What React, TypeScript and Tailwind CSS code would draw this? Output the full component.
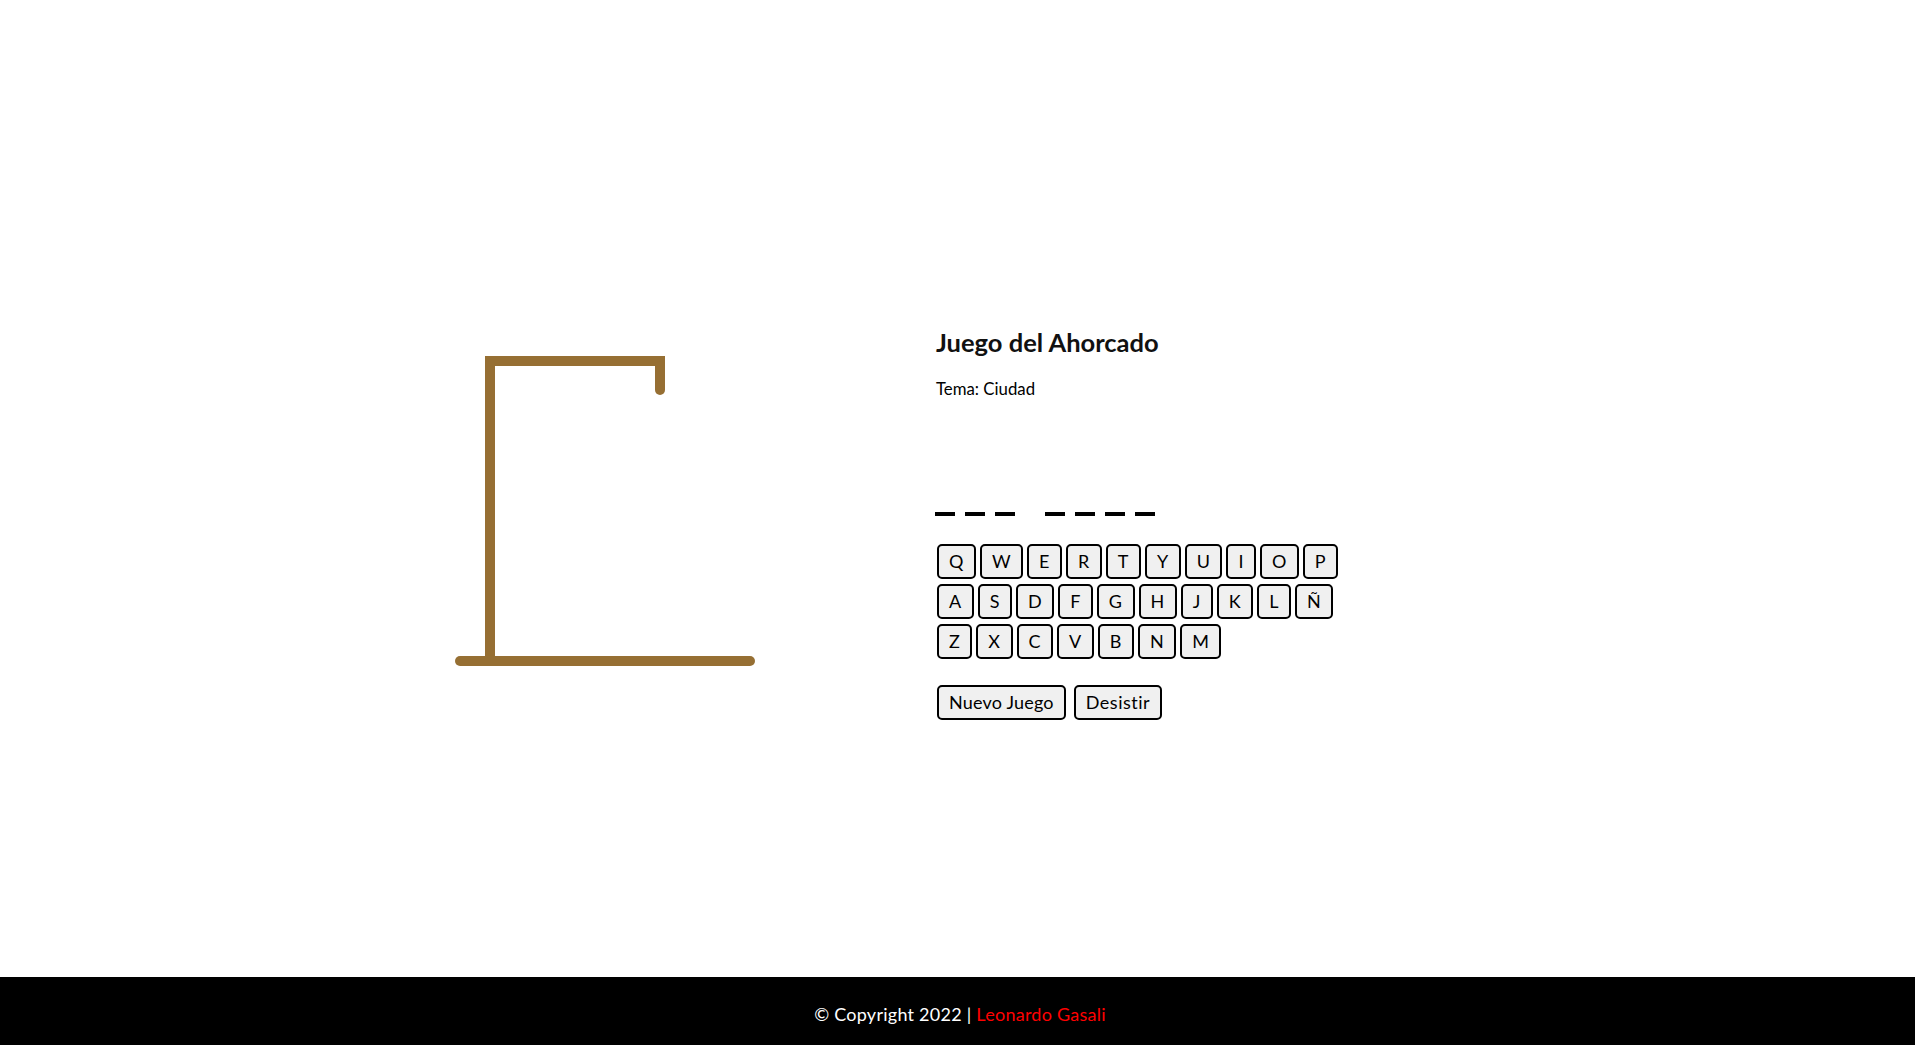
import React from "react";

const rows = [
  ["Q", "W", "E", "R", "T", "Y", "U", "I", "O", "P"],
  ["A", "S", "D", "F", "G", "H", "J", "K", "L", "Ñ"],
  ["Z", "X", "C", "V", "B", "N", "M"],
];

const word = [1, 1, 1, 0, 1, 1, 1, 1];

const btn =
  "h-[35px] px-[10px] border-2 border-black rounded-[5px] bg-[#f0f0f0] text-[18px] leading-none text-black";

export default function App() {
  return (
    <div className="min-h-[1045px] flex flex-col bg-white" style={{ fontFamily: "Lato, 'Noto Sans', sans-serif" }}>
      <main className="h-[977px] flex pl-[450px] pt-[327px]">
        <div className="w-[486px] pt-[23px]">
          <svg width="310" height="320" viewBox="450 350 310 320">
            <g stroke="#966f33" strokeWidth="10" fill="none">
              <path d="M490 661 V361 H660 V390" strokeLinecap="butt" strokeLinejoin="miter" />
              <line x1="660" y1="366" x2="660" y2="390" strokeLinecap="round" />
              <line x1="460" y1="661" x2="750" y2="661" strokeLinecap="round" />
            </g>
          </svg>
        </div>
        <div className="flex flex-col">
          <h1 className="text-[25.5px] font-bold leading-[1.2] text-[#111]">Juego del Ahorcado</h1>
          <p className="mt-[21px] text-[16.8px] leading-[1.2] text-black">Tema: Ciudad</p>
          <div className="mt-[113px] ml-[-1px] flex gap-[10px]">
            {word.map((w, i) =>
              w ? <div key={i} className="w-[20px] h-[4px] bg-black" /> : <div key={i} className="w-[10px] h-[4px]" />
            )}
          </div>
          <div className="mt-[28px] ml-[1px] flex flex-col gap-[5px]">
            {rows.map((r, i) => (
              <div key={i} className="flex gap-[4px]">
                {r.map((k) => (
                  <button key={k} className={`${btn} tracking-[0.5px]`}>
                    {k}
                  </button>
                ))}
              </div>
            ))}
          </div>
          <div className="mt-[26px] ml-[1px] flex gap-[8px]">
            <button className={`${btn} tracking-[0.2px]`}>Nuevo Juego</button>
            <button className={`${btn} tracking-[0.5px]`}>Desistir</button>
          </div>
        </div>
      </main>
      <footer className="h-[68px] bg-black flex items-center justify-center pt-[7px] pl-[5px] text-[18px] tracking-[0.25px] text-white">
        <span>
          © Copyright 2022 | <span className="text-[#ff0000]">Leonardo Gasali</span>
        </span>
      </footer>
    </div>
  );
}
